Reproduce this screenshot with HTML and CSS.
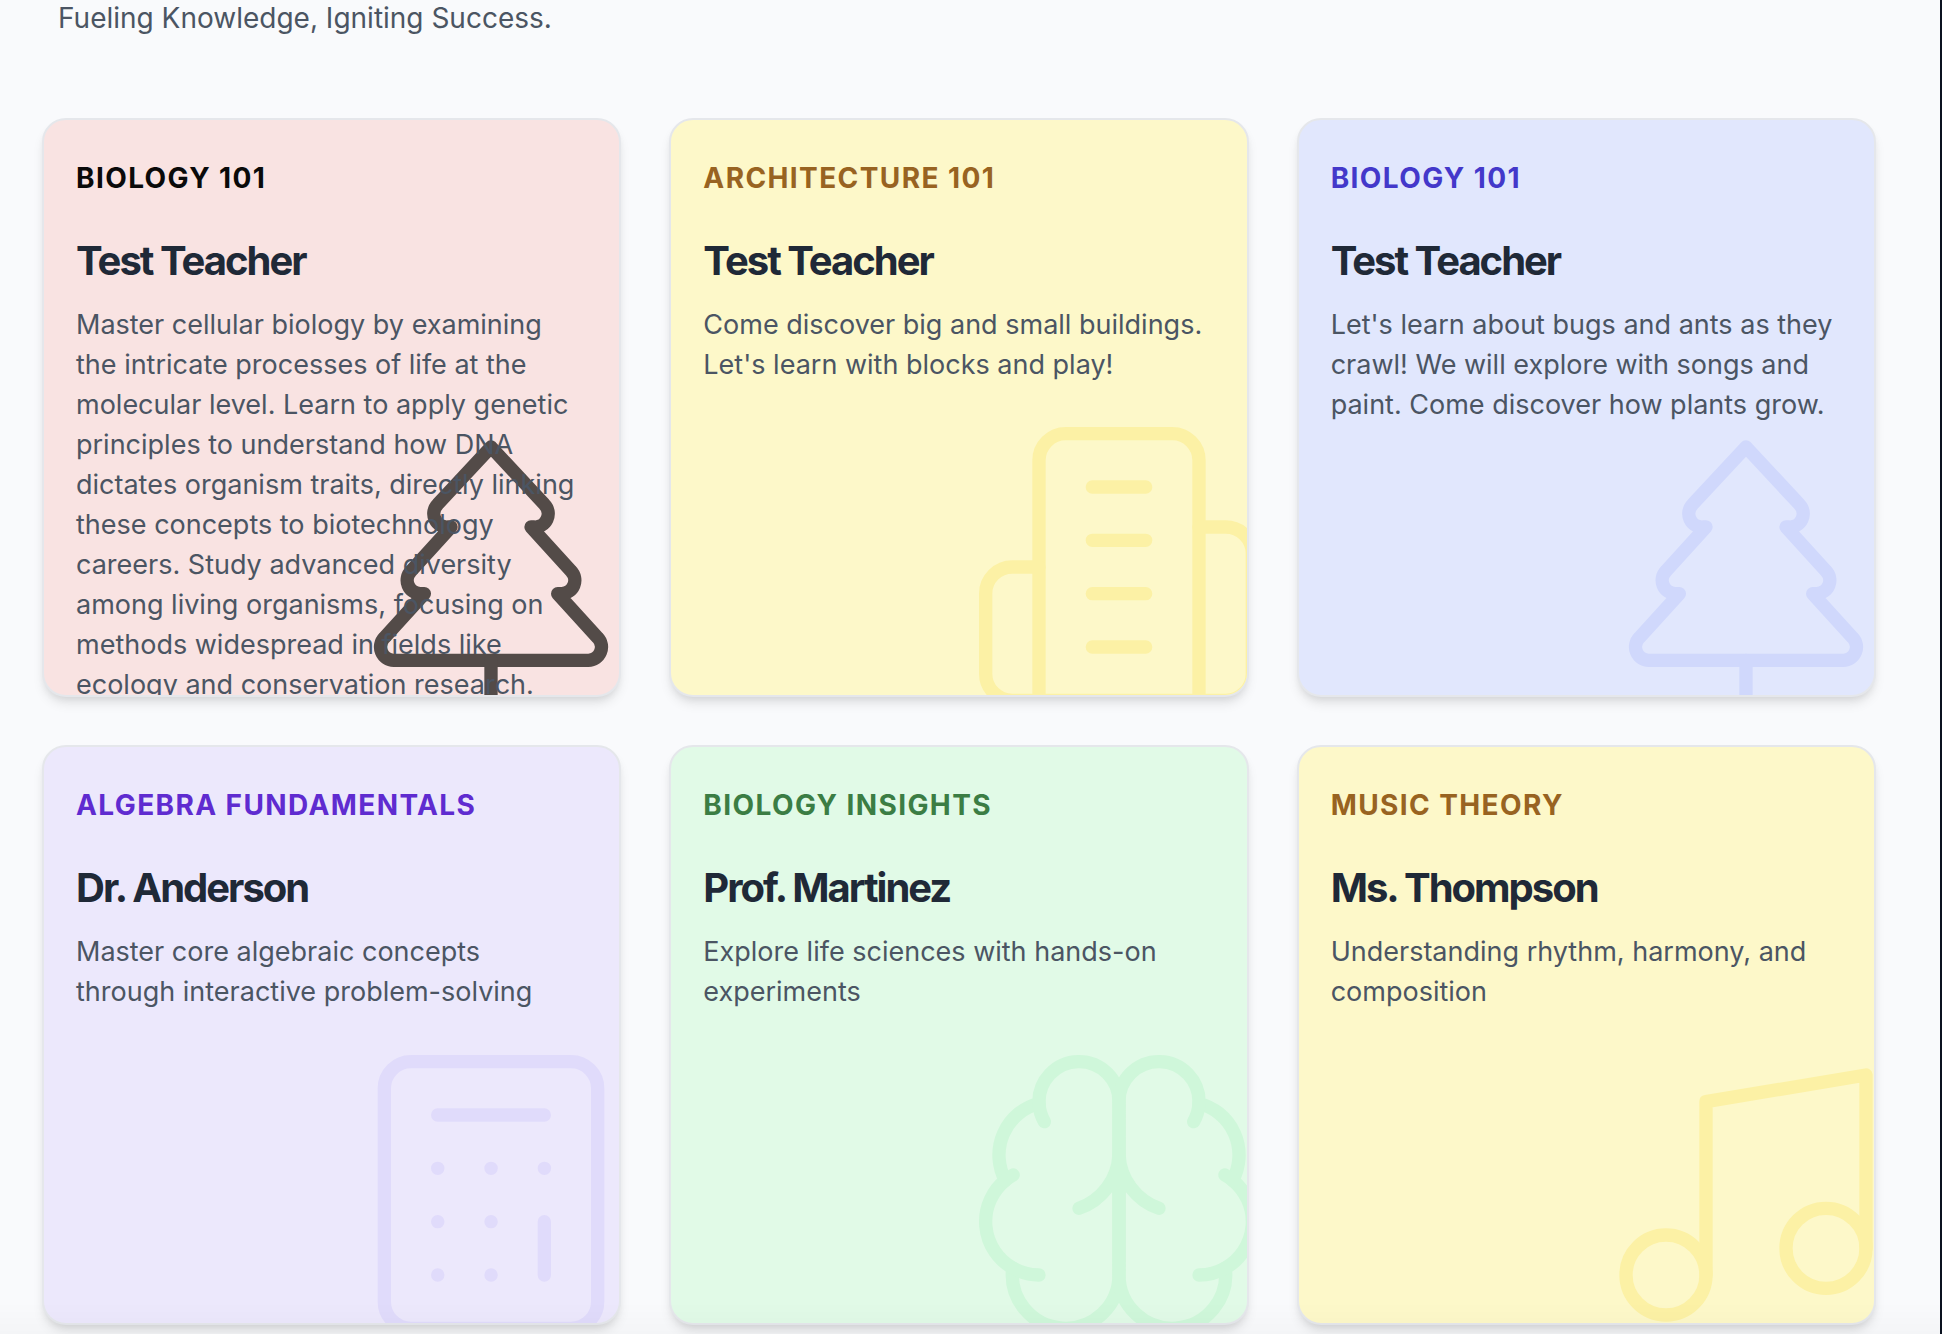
FILE: index.html
```html
<!DOCTYPE html>
<html lang="en">
<head>
<meta charset="utf-8">
<title>Courses</title>
<link rel="stylesheet" href="styles.css">
</head>
<body>
<main class="page">
  <p class="tagline">Fueling Knowledge, Igniting Success.</p>
  <section class="courses">
    <article class="card card-red">
      <svg class="card-icon" viewBox="0 0 24 24" aria-hidden="true"><path d="m17 14 3 3.3a1 1 0 0 1-.7 1.7H4.7a1 1 0 0 1-.7-1.7L7 14h-.3a1 1 0 0 1-.7-1.7L9 9h-.2A1 1 0 0 1 8 7.3L12 3l4 4.3a1 1 0 0 1-.8 1.7H15l3 3.3a1 1 0 0 1-.7 1.7H17Z"/><path d="M12 22v-3"/></svg>
      <h2 class="subject">Biology 101</h2>
      <h3 class="teacher">Test Teacher</h3>
      <p class="summary">Master cellular biology by examining the intricate processes of life at the molecular level. Learn to apply genetic principles to understand how DNA dictates organism traits, directly linking these concepts to biotechnology careers. Study advanced diversity among living organisms, focusing on methods widespread in fields like ecology and conservation research.</p>
    </article>
    <article class="card card-yellow">
      <svg class="card-icon" viewBox="0 0 24 24" aria-hidden="true"><path d="M6 22V4a2 2 0 0 1 2-2h8a2 2 0 0 1 2 2v18Z"/><path d="M6 12H4a2 2 0 0 0-2 2v6a2 2 0 0 0 2 2h2"/><path d="M18 9h2a2 2 0 0 1 2 2v9a2 2 0 0 1-2 2h-2"/><path d="M10 6h4M10 10h4M10 14h4M10 18h4"/></svg>
      <h2 class="subject">Architecture 101</h2>
      <h3 class="teacher">Test Teacher</h3>
      <p class="summary">Come discover big and small buildings. Let's learn with blocks and play!</p>
    </article>
    <article class="card card-indigo">
      <svg class="card-icon" viewBox="0 0 24 24" aria-hidden="true"><path d="m17 14 3 3.3a1 1 0 0 1-.7 1.7H4.7a1 1 0 0 1-.7-1.7L7 14h-.3a1 1 0 0 1-.7-1.7L9 9h-.2A1 1 0 0 1 8 7.3L12 3l4 4.3a1 1 0 0 1-.8 1.7H15l3 3.3a1 1 0 0 1-.7 1.7H17Z"/><path d="M12 22v-3"/></svg>
      <h2 class="subject">Biology 101</h2>
      <h3 class="teacher">Test Teacher</h3>
      <p class="summary">Let's learn about bugs and ants as they crawl! We will explore with songs and paint. Come discover how plants grow.</p>
    </article>
    <article class="card card-violet">
      <svg class="card-icon" viewBox="0 0 24 24" aria-hidden="true"><rect x="4" y="2" width="16" height="20" rx="2"/><path d="M8 6h8M16 14v4M16 10h.01M12 10h.01M8 10h.01M12 14h.01M8 14h.01M12 18h.01M8 18h.01"/></svg>
      <h2 class="subject">Algebra Fundamentals</h2>
      <h3 class="teacher">Dr. Anderson</h3>
      <p class="summary">Master core algebraic concepts<br>through interactive problem-solving</p>
    </article>
    <article class="card card-green">
      <svg class="card-icon" viewBox="0 0 24 24" aria-hidden="true"><path d="M12 5a3 3 0 1 0-5.997.125 4 4 0 0 0-2.526 5.77 4 4 0 0 0 .556 6.588A4 4 0 1 0 12 18Z"/><path d="M12 5a3 3 0 1 1 5.997.125 4 4 0 0 1 2.526 5.77 4 4 0 0 1-.556 6.588A4 4 0 1 1 12 18Z"/><path d="M15 13a4.5 4.5 0 0 1-3-4 4.5 4.5 0 0 1-3 4"/><path d="M17.599 6.5a3 3 0 0 0 .399-1.375"/><path d="M6.003 5.125A3 3 0 0 0 6.401 6.5"/><path d="M3.477 10.896a4 4 0 0 1 .585-.396"/><path d="M19.938 10.5a4 4 0 0 1 .585.396"/><path d="M6 18a4 4 0 0 1-1.967-.516"/><path d="M19.967 17.484A4 4 0 0 1 18 18"/></svg>
      <h2 class="subject">Biology Insights</h2>
      <h3 class="teacher">Prof. Martinez</h3>
      <p class="summary">Explore life sciences with hands-on experiments</p>
    </article>
    <article class="card card-yellow">
      <svg class="card-icon" viewBox="0 0 24 24" aria-hidden="true"><path d="M9 18V5l12-2v13"/><circle cx="6" cy="18" r="3"/><circle cx="18" cy="16" r="3"/></svg>
      <h2 class="subject">Music Theory</h2>
      <h3 class="teacher">Ms. Thompson</h3>
      <p class="summary">Understanding rhythm, harmony, and composition</p>
    </article>
  </section>
</main>
</body>
</html>
```
FILE: styles.css
```css
* {
  box-sizing: border-box;
}

body {
  margin: 0;
  background: #f9fafc;
  color: #4b5563;
  font-family: Inter, "Liberation Sans", sans-serif;
  font-size: 27px;
  line-height: 40px;
}

/* Soft fade along the bottom of the window */
body::after {
  content: "";
  position: fixed;
  right: 0;
  bottom: 0;
  left: 0;
  height: 32px;
  background: linear-gradient(transparent, rgba(0, 0, 0, 0.02));
  pointer-events: none;
}

h2,
h3,
p {
  margin: 0;
}

.page {
  min-height: 100vh;
  padding: 0 64px 8px 42px;
  border-right: 2px solid #0b1220;
}

.tagline {
  padding: 0 16px 82px;
  font-size: 28px;
  line-height: 36px;
}

.courses {
  display: grid;
  grid-template-columns: repeat(3, minmax(0, 1fr));
  gap: 48px;
}

.card {
  position: relative;
  z-index: 0;
  aspect-ratio: 1;
  min-height: 0;
  padding: 38px 32px 0;
  overflow: hidden;
  border: 2px solid #e5e7eb;
  border-radius: 24px;
  box-shadow: 0 8px 12px -2px rgba(0, 0, 0, 0.1), 0 4px 8px -4px rgba(0, 0, 0, 0.1);
}

.card-icon {
  position: absolute;
  right: -32px;
  bottom: -32px;
  z-index: -1;
  width: 320px;
  height: 320px;
  fill: none;
  stroke: currentColor;
  stroke-width: 1;
  stroke-linecap: round;
  stroke-linejoin: round;
}

.subject {
  font-size: 28px;
  font-weight: 700;
  line-height: 40px;
  letter-spacing: 0.05em;
  text-transform: uppercase;
}

.teacher {
  margin: 35px 0 16px;
  color: #1f2937;
  font-size: 40px;
  font-weight: 700;
  line-height: 56px;
  letter-spacing: -0.05em;
}

.card-red { background: #f9e3e2; }
.card-red .subject { color: #0a0a0a; }
.card-red .card-icon { color: #534b48; }

.card-yellow { background: #fdf8c9; }
.card-yellow .subject { color: #986321; }
.card-yellow .card-icon { color: #fcf1a5; }

.card-indigo { background: #e1e7fd; }
.card-indigo .subject { color: #4338ca; }
.card-indigo .card-icon { color: #d0d8fc; }

.card-violet { background: #ece8fc; }
.card-violet .subject { color: #5f2bd0; }
.card-violet .card-icon { color: #e0dbfb; }

.card-green { background: #e1fae7; }
.card-green .subject { color: #3b7d44; }
.card-green .card-icon { color: #cff7da; }
```
